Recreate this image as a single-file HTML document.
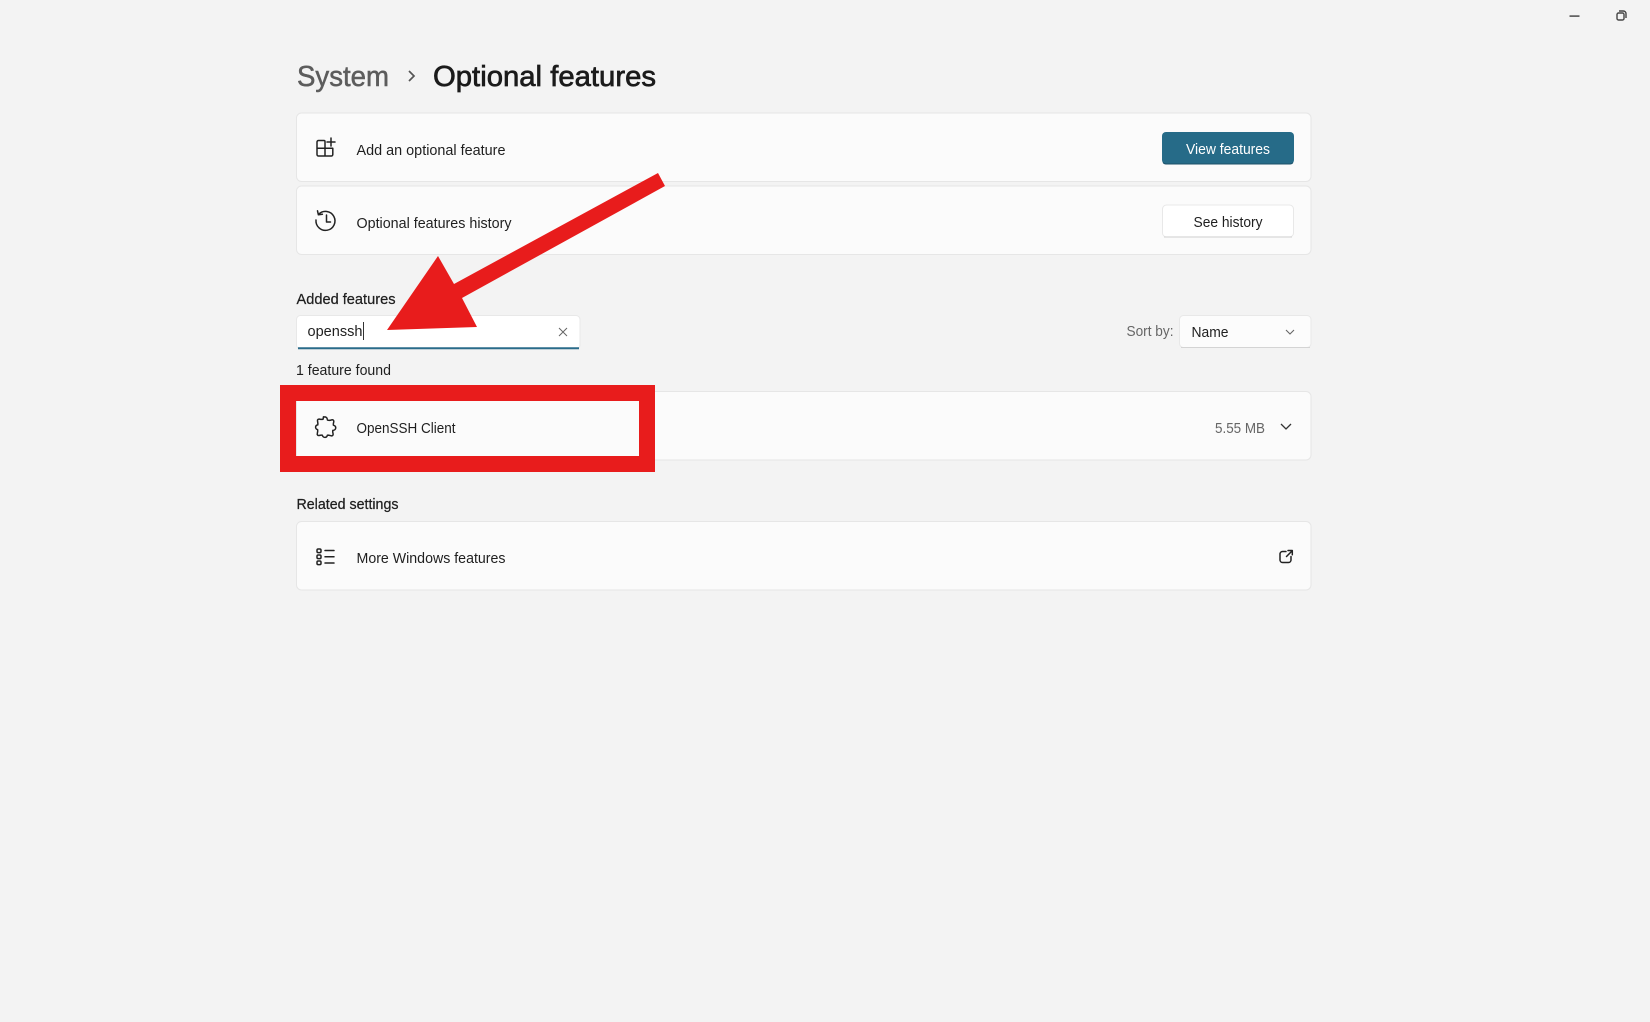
<!DOCTYPE html>
<html><head><meta charset="utf-8"><style>
html,body{margin:0;padding:0;background:#f3f3f3;width:1650px;height:1022px;overflow:hidden}
svg{display:block;font-family:"Liberation Sans",sans-serif;filter:blur(.3px)}
.t{font-size:15px;fill:#1f1f1f}
.s{stroke:#1f1f1f;stroke-width:.25px}
.i{fill:none;stroke:#222;stroke-width:1.5;stroke-linecap:round;stroke-linejoin:round}
</style></head><body>
<svg width="1650" height="1022" viewBox="0 0 1650 1022" xmlns="http://www.w3.org/2000/svg">
<rect width="1650" height="1022" fill="#f3f3f3"/>
<!-- window controls -->
<rect x="1569.500" y="15.300" width="10" height="1.600" fill="#555"/>
<path d="M1617 14.500a1.500 1.500 0 0 1 1.500-1.500h4a1.500 1.500 0 0 1 1.500 1.500v4a1.500 1.500 0 0 1-1.500 1.500h-4a1.500 1.500 0 0 1-1.500-1.500zM1619 11h4.300a2.700 2.700 0 0 1 2.700 2.700v4.300" fill="none" stroke="#444" stroke-width="1.400"/>
<!-- title -->
<text x="297" y="86" font-size="29" fill="#5c5c5c" stroke="#5c5c5c" stroke-width=".5" textLength="92" lengthAdjust="spacingAndGlyphs">System</text>
<path d="M409 71l5 5-5 5" fill="none" stroke="#555" stroke-width="1.700"/>
<text x="433" y="86" font-size="29" fill="#1b1b1b" stroke="#1b1b1b" stroke-width=".7" textLength="223" lengthAdjust="spacingAndGlyphs">Optional features</text>
<!-- cards -->
<g fill="#fbfbfb" stroke="#e6e6e6">
<rect x="296.500" y="113" width="1014.500" height="68.500" rx="5"/>
<rect x="296.500" y="186" width="1014.500" height="68.500" rx="5"/>
<rect x="296.500" y="391.500" width="1014.500" height="68.500" rx="5"/>
<rect x="296.500" y="521.500" width="1014.500" height="68.500" rx="5"/>
</g>
<!-- add icon -->
<path class="i" d="M318.500 140.500h5.500a1 1 0 0 1 1 1V156h-6.500a1.500 1.500 0 0 1-1.500-1.500v-12.500a1.500 1.500 0 0 1 1.500-1.500zM317 148.300h15.800v6.200a1.500 1.500 0 0 1-1.500 1.500H325M331 138v8M327 142h8"/>
<text class="t" x="356.500" y="155" textLength="149" lengthAdjust="spacingAndGlyphs">Add an optional feature</text>
<!-- history icon -->
<path class="i" d="M318.700 214.200A9.500 9.500 0 1 1 316 220M317.500 210.800l.9 4 4-.6M326.500 215v7h4"/>
<text class="t" x="356.500" y="228" textLength="155" lengthAdjust="spacingAndGlyphs">Optional features history</text>
<!-- buttons -->
<rect x="1162" y="132" width="132" height="32" rx="4" fill="#266b88"/>
<path d="M1163 162.500q1 1.500 3 1.500h124q2 0 3-1.500" fill="none" stroke="#1d5068" stroke-width="1"/>
<text x="1186" y="154" font-size="15" fill="#fff" textLength="84" lengthAdjust="spacingAndGlyphs">View features</text>
<rect x="1162.500" y="205" width="131" height="32" rx="4" fill="#fff" stroke="#e8e8e8"/>
<path d="M1164 237h128" stroke="#d8d8d8" stroke-width="1.200"/>
<text class="t" x="1193.500" y="227" textLength="69" lengthAdjust="spacingAndGlyphs">See history</text>
<!-- added features -->
<text class="t s" x="296.500" y="304" textLength="99" lengthAdjust="spacingAndGlyphs">Added features</text>
<rect x="296.500" y="315.500" width="283.500" height="33.500" rx="4" fill="#fff" stroke="#e8e8e8"/>
<path d="M298 348.300h281" stroke="#2a6b8a" stroke-width="2"/>
<text class="t" x="307.500" y="336" textLength="55" lengthAdjust="spacingAndGlyphs">openssh</text>
<rect x="363" y="322" width="1" height="18" fill="#333"/>
<path d="M559 328l8 8M567 328l-8 8" fill="none" stroke="#666" stroke-width="1"/>
<text x="1126.500" y="336" font-size="15" fill="#666" textLength="47" lengthAdjust="spacingAndGlyphs">Sort by:</text>
<rect x="1179.500" y="315.500" width="131.500" height="32" rx="4" fill="#fcfcfc" stroke="#e8e8e8"/>
<path d="M1181 347.500h129" stroke="#d4d4d4"/>
<text class="t" x="1191.500" y="337" textLength="37" lengthAdjust="spacingAndGlyphs">Name</text>
<path d="M1286 330l4 4 4-4" fill="none" stroke="#666" stroke-width="1.100"/>
<text class="t" x="296" y="375" textLength="95" lengthAdjust="spacingAndGlyphs">1 feature found</text>
<!-- openssh row -->
<text x="1215" y="433" font-size="15" fill="#666" textLength="50" lengthAdjust="spacingAndGlyphs">5.55 MB</text>
<path d="M1281 424l5 5 5-5" fill="none" stroke="#333" stroke-width="1.300"/>
<!-- red box -->
<path fill-rule="evenodd" fill="#e81c1c" d="M280 385H655V472H280zM296 401V456H639V401z"/>
<!-- puzzle icon -->
<path class="i" d="M323.500 417.300c1.800-1 3.500 0 3.800 1.800l.2 1c1.400.5 3 .3 4.300-.3 1.200-.3 2.200.6 2 1.900-.3 1.300-.8 2.400-.4 3.500 1.500.4 2.500 1.500 2.300 3-.2 1.400-1.500 2.200-2.900 2.200-.3 1.200 0 2.400.3 3.400.3 1.300-.8 2.300-2 2-1.200-.3-2.400-.8-3.700-.6-.3 1.300-1.200 2.200-2.500 2.200s-2.300-1-2.500-2.200c-1.200-.3-2.300 0-3.300.3-1.300.3-2.200-.9-1.800-2 .3-1.300.7-2.600.3-3.900-1.300-.2-2.100-1.300-2-2.500.1-1.300 1-2.100 2.200-2.200.3-1.300-.1-2.800-.3-4-.2-1.200.8-2 2-1.800 1.200.3 2.500.5 3.600.1.100-.9.200-1.500.4-2.400z"/>
<text class="t" x="356.500" y="433" textLength="99" lengthAdjust="spacingAndGlyphs">OpenSSH Client</text>
<!-- related -->
<text class="t s" x="296.500" y="509" textLength="102" lengthAdjust="spacingAndGlyphs">Related settings</text>
<g class="i"><rect x="317" y="549" width="4" height="3.600" rx="1.200"/><rect x="317" y="555" width="4" height="3.600" rx="1.200"/><rect x="317" y="561" width="4" height="3.600" rx="1.200"/><path d="M325 550.500h9M325 556.800h9M325 563h9"/></g>
<text class="t" x="356.500" y="563" textLength="149" lengthAdjust="spacingAndGlyphs">More Windows features</text>
<path class="i" d="M1286 551.500h-3.500a2.500 2.500 0 0 0-2.500 2.500v6a2.500 2.500 0 0 0 2.500 2.500h6a2.500 2.500 0 0 0 2.500-2.500v-3.500M1286.500 556.500l5.500-5.500M1288 550.500h4.300v4.300"/>
<!-- red arrow -->
<polygon fill="#e81c1c" points="387,330 438,256 454,284 658,173 665,186 462,298 477,327"/>
</svg>
</body></html>
